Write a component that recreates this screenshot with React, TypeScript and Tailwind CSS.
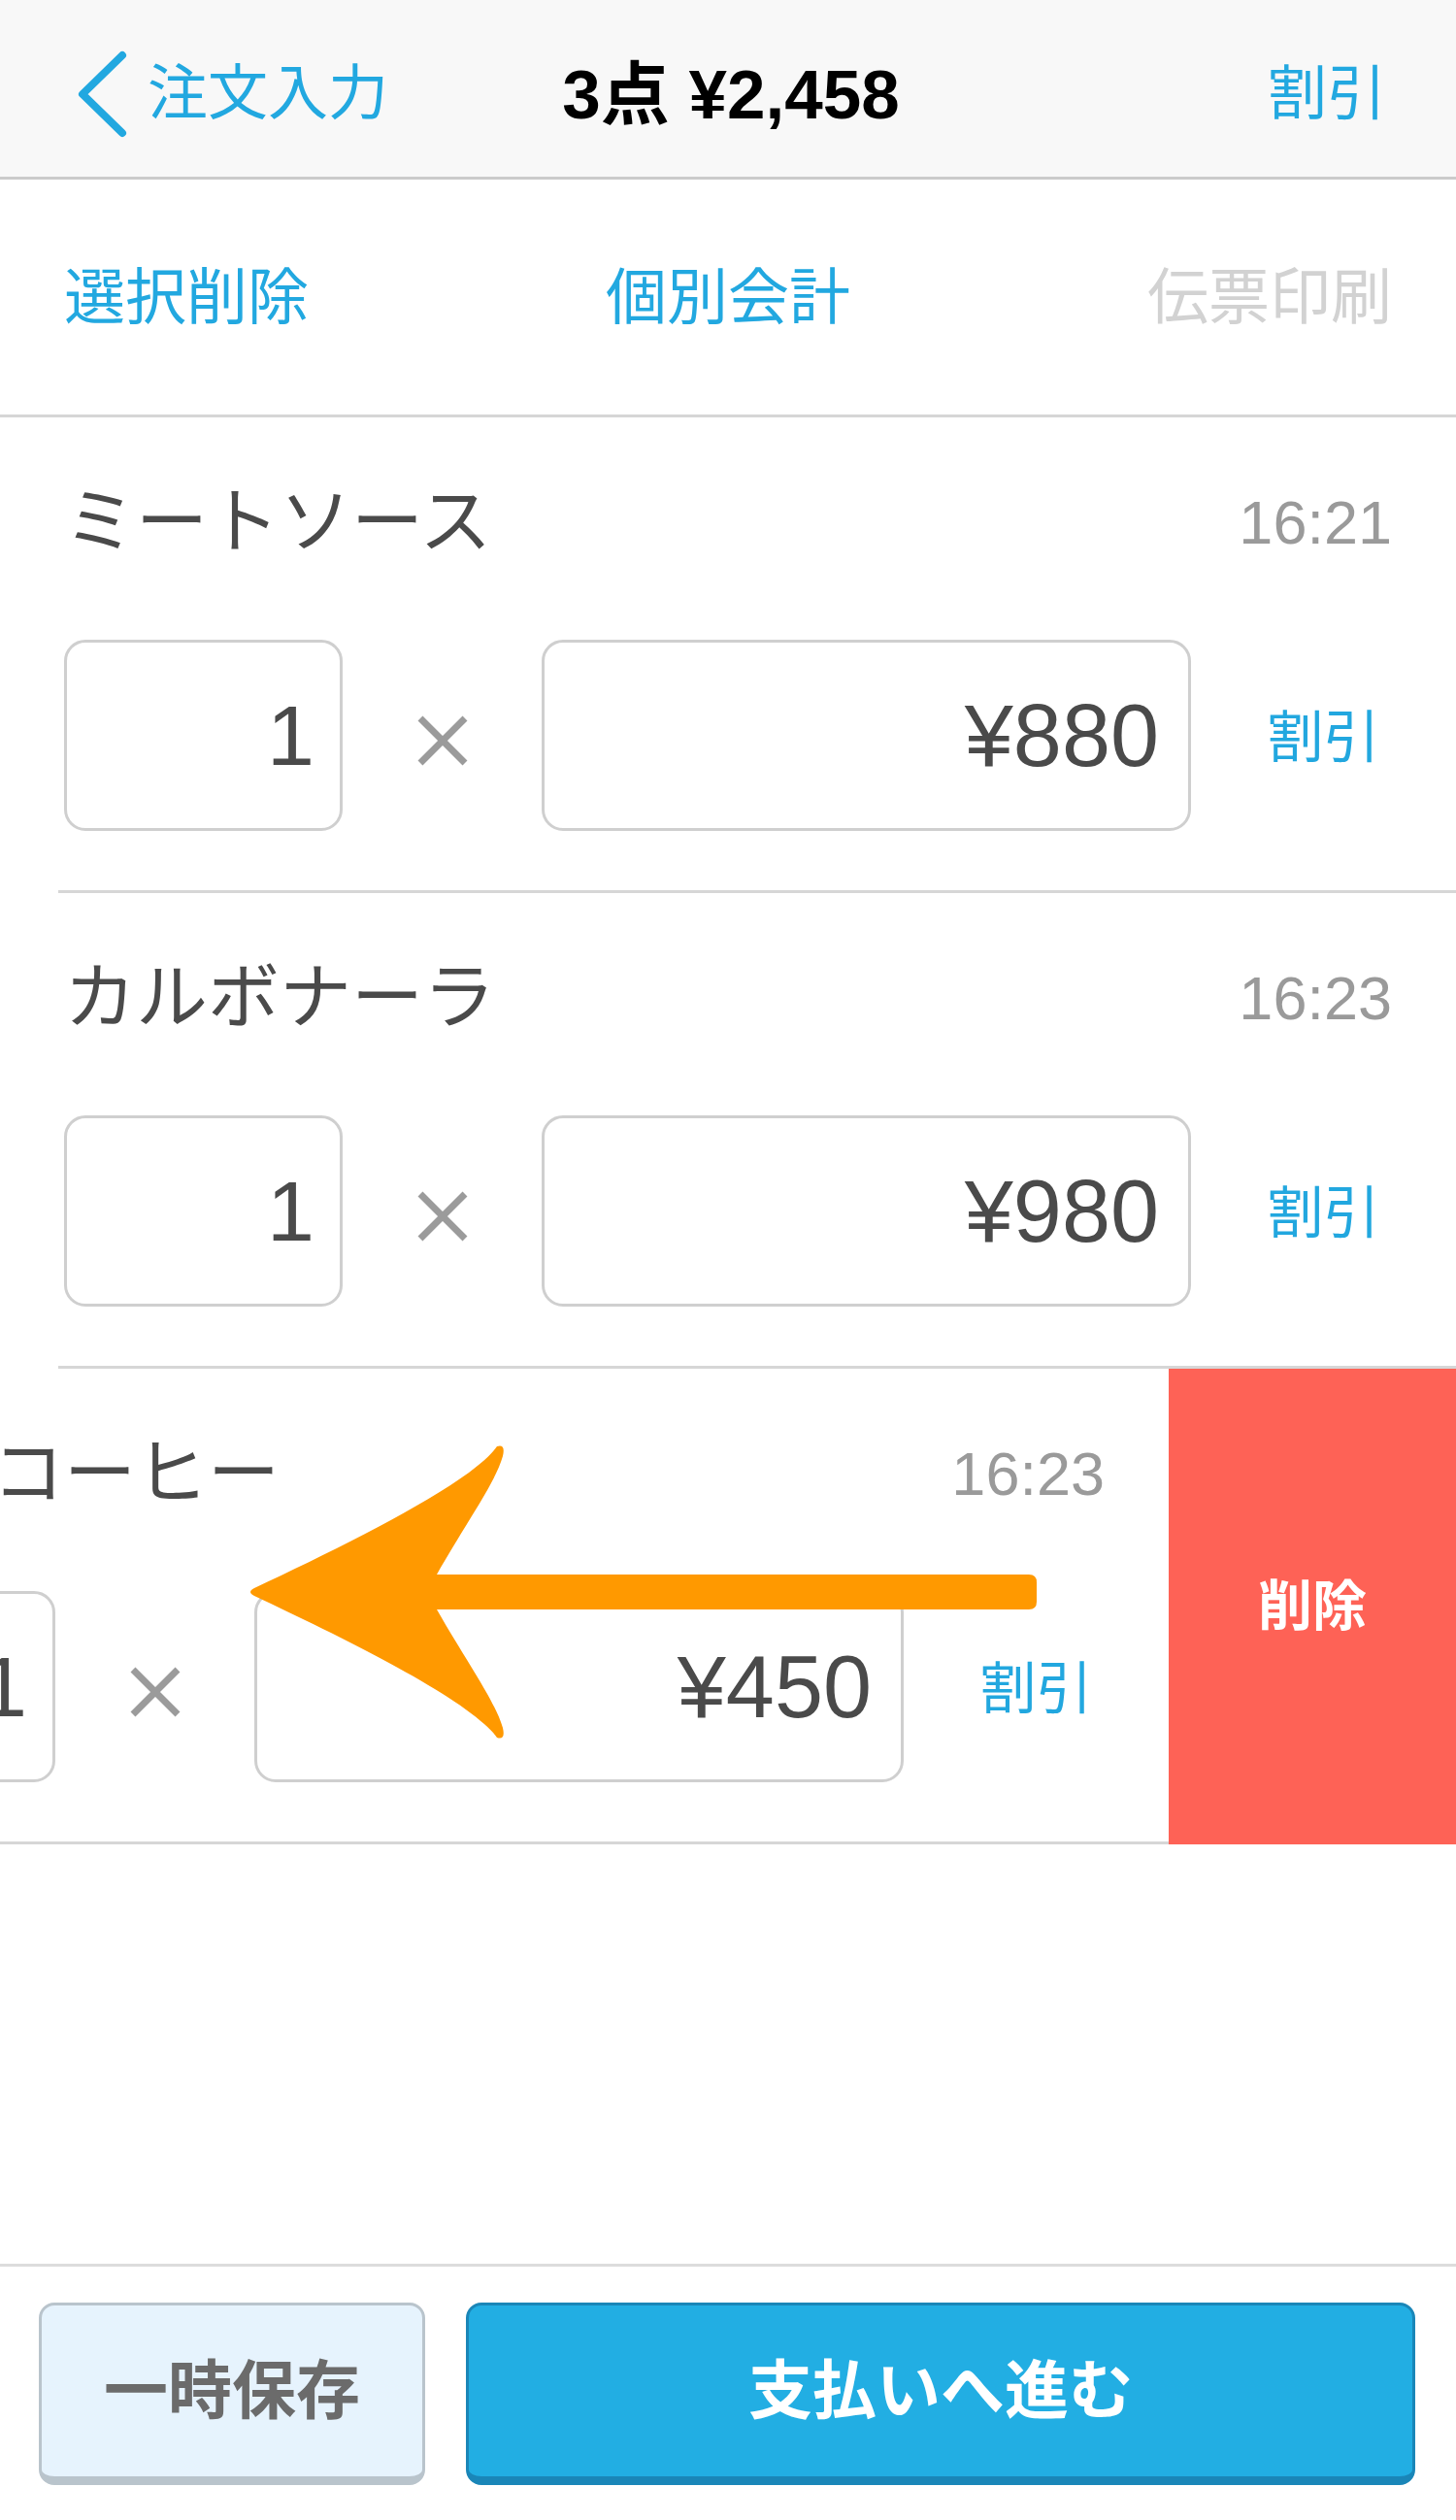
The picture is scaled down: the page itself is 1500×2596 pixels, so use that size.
type Item = {
  name: string;
  time: string;
  qty: number;
  price: string;
  swiped?: boolean;
};

const items: Item[] = [
  { name: "ミートソース", time: "16:21", qty: 1, price: "¥880" },
  { name: "カルボナーラ", time: "16:23", qty: 1, price: "¥980" },
  { name: "ホットコーヒー", time: "16:23", qty: 1, price: "¥450", swiped: true },
];

const font = { fontFamily: '"Liberation Sans", "Noto Sans CJK JP", sans-serif' };

function Times() {
  return (
    <svg width="54" height="54" viewBox="0 0 54 54">
      <path d="M4 4 L50 50 M50 4 L4 50" stroke="#9b9b9b" strokeWidth="7" />
    </svg>
  );
}

function ItemBody({ item }: { item: Item }) {
  return (
    <>
      <div className="h-[216px] flex items-center justify-between pl-[66px] pr-[66px]">
        <span className="text-[74px] leading-none text-[#4a4a4a]">{item.name}</span>
        <span className="text-[63px] leading-none text-[#9a9a9a]">{item.time}</span>
      </div>
      <div className="mt-[13px] h-[197px] flex items-center pl-[66px]">
        <div className="w-[287px] h-full border-[3px] border-[#cfcfcf] rounded-[22px] flex items-center justify-end pr-[26px] text-[88px] leading-none text-[#4a4a4a]">
          {item.qty}
        </div>
        <div className="w-[205px] flex justify-center pt-[10px]">
          <Times />
        </div>
        <div className="w-[669px] h-full border-[3px] border-[#cfcfcf] rounded-[22px] flex items-center justify-end pr-[30px] text-[90px] leading-none text-[#4a4a4a]">
          {item.price}
        </div>
        <div className="flex-1 flex justify-center text-[58px] leading-none text-[#22a7df] pt-[4px]">割引</div>
      </div>
    </>
  );
}

function SwipedRow({ item }: { item: Item }) {
  return (
    <div className="flex h-[490px] overflow-hidden">
      <div className="w-[1500px] shrink-0 ml-[-296px] border-b-[3px] border-[#d6d6d6] bg-white">
        <ItemBody item={item} />
      </div>
      <div className="w-[296px] shrink-0 bg-[#fe6256] flex items-center justify-center">
        <span className="text-[56px] font-bold leading-none text-white">削除</span>
      </div>
    </div>
  );
}

function PlainRow({ item }: { item: Item }) {
  return (
    <div className="h-[490px] flex flex-col">
      <div className="flex-1">
        <ItemBody item={item} />
      </div>
      <div className="ml-[60px] h-[3px] bg-[#d6d6d6]" />
    </div>
  );
}

export default function App() {
  return (
    <div className="relative w-[1500px] h-[2596px] bg-white overflow-hidden" style={font}>
      <header className="h-[185px] bg-[#f8f8f8] border-b-[3px] border-[#cbcbcb] flex items-center pt-[12px]">
        <div className="flex-1 flex items-center pl-[78px] gap-[18px]">
          <svg width="56" height="90" viewBox="0 0 56 90">
            <path d="M48 5 L7 45 L48 85" fill="none" stroke="#22a8e0" strokeWidth="8" strokeLinecap="round" strokeLinejoin="round" />
          </svg>
          <span className="text-[62px] leading-none text-[#22a8e0]">注文入力</span>
        </div>
        <div className="text-[71px] font-bold leading-none text-black">3点 ¥2,458</div>
        <div className="flex-1 flex justify-end pr-[72px]">
          <span className="text-[61px] leading-none text-[#22a8e0]">割引</span>
        </div>
      </header>

      <div className="h-[245px] border-b-[3px] border-[#d6d6d6] flex items-center justify-between px-[66px] text-[63px] leading-none">
        <span className="text-[#22a8e0]">選択削除</span>
        <span className="text-[#22a8e0]">個別会計</span>
        <span className="text-[#d2d2d2]">伝票印刷</span>
      </div>

      <div className="h-[1902px]">
        {items.map((item) =>
          item.swiped ? <SwipedRow key={item.name} item={item} /> : <PlainRow key={item.name} item={item} />
        )}
      </div>

      <div className="border-t-[3px] border-[#dcdcdc] pt-[37px] flex gap-[42px] pl-[40px] pr-[42px]">
        <button className="w-[398px] h-[188px] rounded-[16px] bg-[#e6f3fd] border-[3px] border-b-[9px] border-[#b9c4cc] flex items-center justify-center text-[66px] font-bold text-[#6b6b6b] leading-none">
          一時保存
        </button>
        <button className="flex-1 h-[188px] rounded-[16px] bg-[#22aee3] border-[3px] border-b-[9px] border-[#1a86b8] flex items-center justify-center text-[66px] font-bold text-white leading-none">
          支払いへ進む
        </button>
      </div>

      <svg
        className="absolute left-0 top-0 pointer-events-none"
        width="1500"
        height="2596"
        viewBox="0 0 1500 2596"
      >
        <path
          d="M1060 1622 L450 1622 C482 1566 510 1528 518 1500 Q521 1487 512 1490 C485 1528 360 1590 262 1636 Q254 1640 262 1644 C360 1690 485 1752 512 1790 Q521 1793 518 1780 C510 1752 482 1714 450 1658 L1060 1658 Q1068 1658 1068 1650 L1068 1630 Q1068 1622 1060 1622 Z"
          fill="#ff9900"
        />
      </svg>
    </div>
  );
}
